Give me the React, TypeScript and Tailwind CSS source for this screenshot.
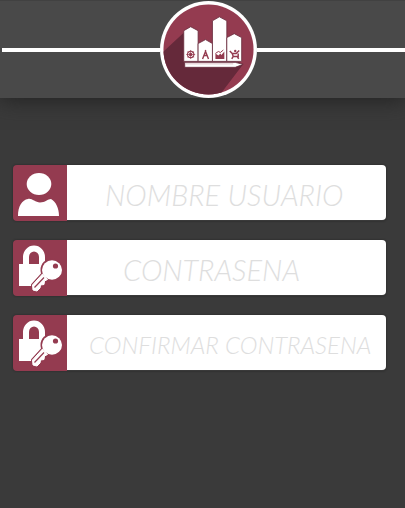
import React from "react";

function Logo() {
  return (
    <svg viewBox="0 0 98 98" className="block size-[97px] shrink-0" role="img" aria-label="Logo">
      <defs>
        <clipPath id="disc">
          <circle cx="49" cy="49" r="45.500" />
        </clipPath>
      </defs>
      <circle cx="49" cy="49" r="49" fill="#fff" />
      <circle cx="49" cy="49" r="45.500" fill="#943b50" />
      <g clipPath="url(#disc)">
        <path d="M25 31 L-5 59 V98 H58 L84 64 L70 56 H25 Z" fill="#65293a" />
      </g>
      <g fill="#fff" stroke="#65293a" strokeWidth="0.8">
        <path d="M24 61 V30 L31 26 L38.500 30 V61 Z" />
        <path d="M38.500 61 V43 L46 39 L53 43 V61 Z" />
        <path d="M53 61 V20 L60 16 L67.500 20 V61 Z" />
        <path d="M67.500 61 V37 L75 33 L82.500 37 V61 Z" />
        <path d="M25 62 H76 L84 64 L76 67 H25 Z" />
      </g>
      <path d="M26 63.500 H74" stroke="#b98491" strokeWidth="0.5" />
      <g fill="none" stroke="#943b50" strokeWidth="1.100">
        <circle cx="31" cy="54" r="3.200" />
        <circle cx="31" cy="54" r="1" />
        <path d="M31 49.500 V58.500 M26.500 54 H35.500 M28 51 L34 57 M34 51 L28 57" strokeWidth="0.8" />
        <path d="M43 58.500 L46 51 L49 58.500 M46 49.500 V53 M44.500 55 H47.500" strokeWidth="1.400" />
        <path d="M70.500 50.500 L73 53 H77 L80 50 M73 53 L74 56 H79 L79 53 M74 56 L72.500 58.500 M78 56 L79.500 58.500" strokeWidth="1.500" />
      </g>
      <circle cx="76" cy="50.500" r="1.200" fill="#943b50" />
      <path d="M56 58.500 V53 L59 55 L61 53 L62 54.500 L65 51 V58.500 Z" fill="#943b50" />
      <path d="M56 53 L59 51 L61 52 L64 49.500" fill="none" stroke="#943b50" />
    </svg>
  );
}

function UserIcon() {
  return (
    <svg viewBox="0 0 54 56" className="block h-[56px] w-[54px]" fill="#fff" aria-hidden="true">
      <ellipse cx="26" cy="19" rx="12.300" ry="11" />
      <path d="M5 51 C5 41 9 35 15 34 C19 33 22 37.500 27 37.500 C32 37.500 35 34 38 34 C43 37 46 43 46 51 Z" />
    </svg>
  );
}

function LockKeyIcon() {
  return (
    <svg viewBox="0 0 54 56" className="block h-[56px] w-[54px]" aria-hidden="true">
      <path d="M13 25 V17 A8 8.500 0 0 1 29 17 V25" fill="none" stroke="#fff" strokeWidth="6" />
      <path d="M6 24 H34 V36 L26 46 H6 Z" fill="#fff" />
      <g strokeLinejoin="round">
        <path
          d="M29.500 34 L19.500 45 L20 50 L24 51 L27 48 L27.500 45 L31 44.500 L31.500 41 L34.500 39.500 Z"
          fill="#943b50"
          stroke="#943b50"
          strokeWidth="3"
        />
        <circle cx="39" cy="30" r="11.500" fill="#943b50" />
        <path
          d="M29.500 34 L19.500 45 L20 50 L24 51 L27 48 L27.500 45 L31 44.500 L31.500 41 L34.500 39.500 Z"
          fill="#fff"
          stroke="#fff"
        />
      </g>
      <ellipse cx="39" cy="30" rx="10" ry="9.700" fill="#fff" />
      <circle cx="42.500" cy="26" r="2.600" fill="#943b50" />
      <path d="M21.500 47.500 L31 37.500" stroke="#943b50" strokeWidth="1.200" />
    </svg>
  );
}

interface FieldProps {
  id: string;
  label: string;
  type: string;
  icon: React.ReactNode;
  text: string;
}

function Field({ id, label, type, icon, text }: FieldProps) {
  return (
    <div className="flex h-[56px] rounded-[4px] shadow-[0_0_2px_#222]">
      <label
        htmlFor={id}
        aria-label={label}
        className="w-[54px] shrink-0 overflow-hidden rounded-l-[4px] bg-[#943b50]"
      >
        {icon}
      </label>
      <input
        id={id}
        type={type}
        placeholder={label}
        className={`h-[55px] min-w-0 flex-1 rounded-r-[4px] bg-white pt-[4px] font-['Lato',sans-serif] font-light text-[#555] italic outline-none placeholder:text-[#dedede] placeholder:opacity-100 ${text}`}
      />
    </div>
  );
}

export default function App() {
  return (
    <main className="min-h-screen bg-[#3a3a3a]">
      <header className="flex items-center border-t border-[#414141] bg-[#494949] pl-[2px] shadow-[0_2px_20px_#222]">
        <div className="h-1 grow-[157] basis-0 bg-white" />
        <Logo />
        <div className="h-1 grow-[148] basis-0 bg-white" />
      </header>
      <form className="flex flex-col gap-[19px] pt-[67px] pr-[19px] pl-[13px]">
        <Field
          id="usuario"
          label="NOMBRE USUARIO"
          type="text"
          icon={<UserIcon />}
          text="pl-[38px] text-[29px]"
        />
        <Field
          id="contrasena"
          label="CONTRASENA"
          type="password"
          icon={<LockKeyIcon />}
          text="pl-[56px] text-[29px]"
        />
        <Field
          id="confirmar"
          label="CONFIRMAR CONTRASENA"
          type="password"
          icon={<LockKeyIcon />}
          text="pl-[22px] text-[24px]"
        />
      </form>
    </main>
  );
}
